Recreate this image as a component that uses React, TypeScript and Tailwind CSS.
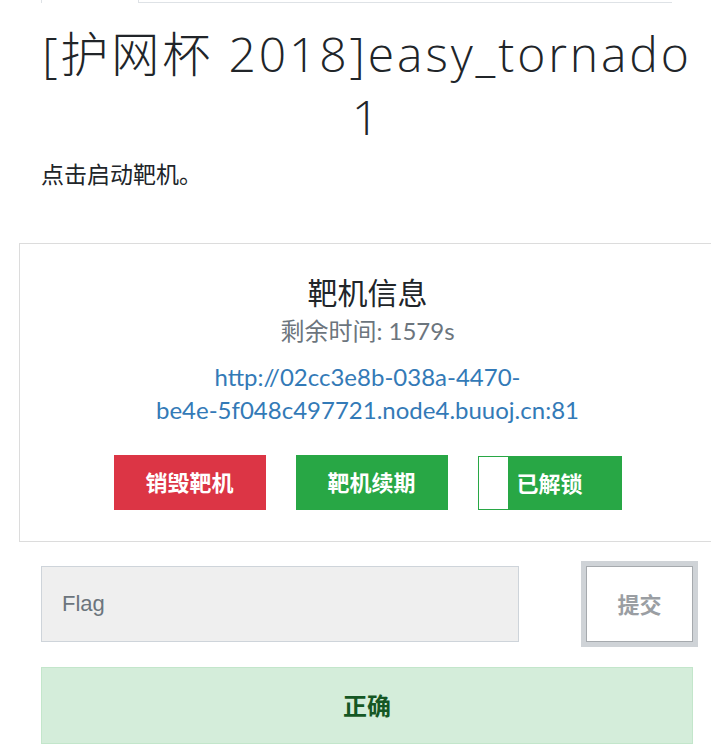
const sans = "font-['Lato','Noto_Sans_CJK_SC',sans-serif]";

function ChallengeHeader() {
  return (
    <>
      {/* tab strip remnant */}
      <div className="flex h-[3px] ml-[41px]">
        <div className="w-[98px] border-x border-[#dee2e6]" />
        <div className="w-[533px] border-b border-[#dee2e6]" />
      </div>

      <div className="ml-[41px] w-[652px]">
        <h1 className="mt-[19px] text-center text-[48px] leading-[63px] font-light text-[#212529] whitespace-nowrap font-['Open_Sans','Noto_Sans_CJK_SC',sans-serif] tracking-[2.9px]">
          [护网杯 2018]easy_tornado
          <br />1
        </h1>
        <p className="mt-[10px] text-[23px] leading-[33px] text-[#212529]">点击启动靶机。</p>
      </div>
    </>
  );
}

function TargetCard() {
  return (
    <div className="ml-[19px] mt-[52px] w-[697px] h-[299px] border border-[#dcdcdc] pt-[30px] flex flex-col items-center">
      <div className="text-[30px] leading-[36px] text-[#212529]">靶机信息</div>
      <div className="mt-[4px] text-[24px] leading-[34px] text-[#6c757d]">剩余时间: 1579s</div>
      <a href="#" className="mt-[12px] text-center text-[24px] leading-[33px] text-[#337ab7] whitespace-nowrap">
        http://02cc3e8b-038a-4470-
        <br />
        be4e-5f048c497721.node4.buuoj.cn:81
      </a>

      <div className="mt-[29px] flex items-start gap-[30px]">
        <button className="w-[152px] h-[55px] bg-[#dc3545] text-white text-[22px] font-bold">销毁靶机</button>
        <button className="w-[152px] h-[55px] bg-[#28a745] text-white text-[22px] font-bold">靶机续期</button>
        <button className="relative mt-[1px] w-[144px] h-[54px] border border-[#28a745] bg-[#28a745] text-white text-[22px] font-bold">
          <span className="absolute left-0 top-0 bottom-0 w-[29px] bg-white" />
          已解锁
        </button>
      </div>
    </div>
  );
}

function FlagForm() {
  return (
    <div className="ml-[41px] w-[652px]">
      <div className="mt-[24px] flex items-center gap-[67px]">
        <input
          placeholder="Flag"
          className="w-[478px] h-[76px] bg-[#efefef] border border-[#ced4da] pl-[20px] text-[22px] font-['Liberation_Sans',sans-serif] placeholder:text-[#6c757d] outline-none"
        />
        <button className="w-[107px] h-[76px] bg-white border border-[#a6aaae] ring-[5px] ring-[#cfd3d7] text-[22px] font-bold text-[#9a9ea3]">
          提交
        </button>
      </div>

      <div className="mt-[25px] h-[77px] border border-[#c3e6cb] bg-[#d4edda] flex items-center justify-center text-[24px] font-bold text-[#155724]">
        正确
      </div>
    </div>
  );
}

export default function App() {
  return (
    <div className={`w-[711px] h-[756px] overflow-hidden bg-white ${sans}`}>
      <ChallengeHeader />
      <TargetCard />
      <FlagForm />
    </div>
  );
}
